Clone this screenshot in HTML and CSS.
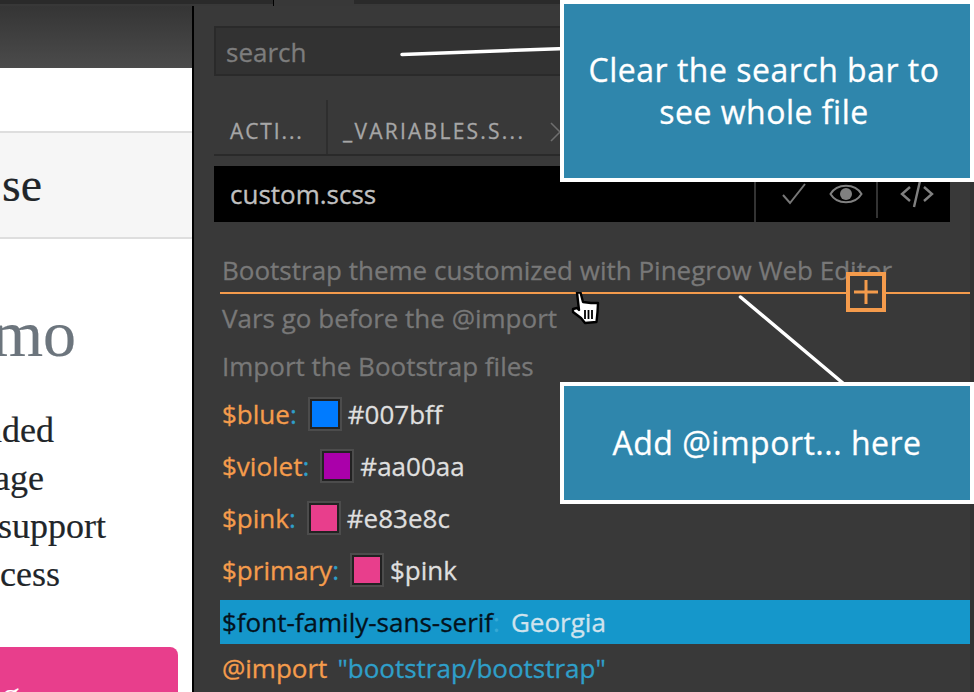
FILE: index.html
```html
<!DOCTYPE html>
<html lang="en">
<head>
<meta charset="utf-8">
<title>Pinegrow SCSS editor</title>
<link rel="stylesheet" href="styles.css">
</head>
<body>
<div class="app">
  <div class="topbar"><span class="top-left"></span><span class="top-tab"></span><span class="top-right"></span></div>
  <div class="main">
    <section class="preview">
      <div class="preview-head"></div>
      <div class="page-nav"></div>
      <div class="jumbo-strip"><span class="strip-title">se</span></div>
      <div class="page-body">
        <h1 class="clip demo">mo</h1>
        <ul class="features">
          <li class="clip w54">nded</li>
          <li class="clip w44">age</li>
          <li class="clip w106">support</li>
          <li class="clip w60">ccess</li>
        </ul>
        <div class="cta"><span class="clip cta-text">ng</span></div>
      </div>
    </section>
    <section class="panel">
      <div class="panel-inner">
        <div class="search">search</div>
        <div class="tabs">
          <div class="tab tab-first">ACTI...</div>
          <div class="tab tab-second">_VARIABLES.S...
            <svg class="tab-close" viewBox="0 0 20 20" width="20" height="20"><path d="M1 1 L19 19 M19 1 L1 19" fill="none" stroke="#6e6e6e" stroke-width="1.600"/></svg>
          </div>
        </div>
        <div class="filebar">
          <span class="filename">custom.scss</span>
          <div class="file-tools">
            <svg class="ico-check" viewBox="0 0 24 24" width="24" height="24"><path d="M1 13 L8 21 L23 2" fill="none" stroke="#777" stroke-width="2"/></svg>
            <svg class="ico-eye" viewBox="0 0 34 24" width="34" height="24"><path d="M1.500 12 C8 1 26 1 32.500 12 C26 23 8 23 1.500 12 Z" fill="none" stroke="#808080" stroke-width="2"/><circle cx="17" cy="12" r="6" fill="#808080"/></svg>
            <svg class="ico-code" viewBox="0 0 34 28" width="34" height="28"><path d="M10 7 L2 14 L10 21 M24 7 L32 14 L24 21 M20 1 L14 27" fill="none" stroke="#808080" stroke-width="2.400"/></svg>
          </div>
        </div>
      </div>
      <div class="code">
        <div class="line comment">Bootstrap theme customized with Pinegrow Web Editor</div>
        <div class="line comment">Vars go before the @import</div>
        <div class="line comment">Import the Bootstrap files</div>
        <div class="line var"><span class="key">$blue</span><span class="colon">:</span><span class="swatch"><i class="c-blue"></i></span><span class="val">#007bff</span></div>
        <div class="line var"><span class="key">$violet</span><span class="colon">:</span><span class="swatch"><i class="c-violet"></i></span><span class="val">#aa00aa</span></div>
        <div class="line var"><span class="key">$pink</span><span class="colon">:</span><span class="swatch"><i class="c-pink"></i></span><span class="val">#e83e8c</span></div>
        <div class="line var"><span class="key">$primary</span><span class="colon">:</span><span class="swatch"><i class="c-pink"></i></span><span class="val">$pink</span></div>
        <div class="line selected"><span class="sel-key">$font-family-sans-serif</span><span class="sel-colon">:</span><span class="sel-val">Georgia</span></div>
        <div class="line import"><span class="key">@import</span><span class="str">"bootstrap/bootstrap"</span></div>
      </div>
    </section>
  </div>

  <div class="insert-line"></div>
  <div class="insert-plus"><svg viewBox="0 0 24 24" width="24" height="24"><path d="M12 0 V24 M0 12 H24" stroke="#f49b4c" stroke-width="3"/></svg></div>
  <svg class="arrows" viewBox="0 0 974 692" width="974" height="692"><path d="M402 54.500 L566 48.500" stroke="#fff" stroke-width="3.500" stroke-linecap="round" fill="none"/><path d="M740.500 297 L844 384" stroke="#fff" stroke-width="3.500" stroke-linecap="round" fill="none"/></svg>
  <svg class="cursor" viewBox="0 0 30 34" width="30" height="34"><path d="M6 0.500 L9.500 0.500 L12 10 L20 11 L27 11 L26.500 20 L25.500 30 L14 31 L10 26 L2 20 L2 17 L6 16 L8 18 Z" fill="#fff" stroke="#000" stroke-width="2.400" stroke-linejoin="round"/><path d="M14 18 V27 M17.500 18 V27 M21 18 V27" stroke="#000" stroke-width="1.800"/></svg>

  <div class="callout callout-search">Clear the search bar to<br>see whole file</div>
  <div class="callout callout-import">Add @import... here</div>
</div>
</body>
</html>
```

FILE: styles.css
```css
* { box-sizing: border-box; }
html, body { margin: 0; padding: 0; }
body { background: #393939; }
.app { position: relative; width: 974px; height: 692px; overflow: hidden; font-family: "Open Sans", "Noto Sans", sans-serif; font-weight: 500; -webkit-text-stroke: .3px currentColor; }

.topbar { display: flex; height: 6px; background: #383838; }
.top-left { width: 273px; height: 4px; background: #2a2a2a; }
.top-tab { width: 81px; border-left: 1px solid #000; height: 6px; background: #383838; }
.top-right { flex: 1; height: 4px; background: #2a2a2a; }

.main { display: flex; height: 686px; }
.preview { width: 194px; flex: none; border-right: 2px solid #000; background: #fff; overflow: hidden; -webkit-text-stroke: .2px currentColor; }
.preview-head { height: 62px; background: linear-gradient(#353535, #4b4b4b); }
.page-nav { height: 63px; background: #fff; }
.jumbo-strip { height: 108px; background: #f6f6f6; border-top: 2px solid #dedede; border-bottom: 2px solid #dedede; display: flex; justify-content: flex-end; width: 192px; padding-right: 150px; padding-top: 22px; font-family: "Liberation Serif", Georgia, serif; font-weight: 400; }
.clip { font-family: "Liberation Serif", Georgia, serif; font-weight: 400; white-space: nowrap; display: flex; justify-content: flex-end; }
.strip-title { font-size: 48px; line-height: 60px; color: #212529; }
.page-body { position: relative; }
.demo { margin: 58px 0 0; width: 76px; font-size: 66px; line-height: 74px; color: #6c757d; }
.features { list-style: none; margin: 35px 0 0; padding: 0; font-size: 36px; line-height: 48px; color: #212529; }
.w54 { width: 54px; }
.w44 { width: 44px; }
.w106 { width: 106px; }
.w60 { width: 60px; }
.cta { margin-top: 49px; width: 178px; height: 60px; background: #e83e8c; border-radius: 0 8px 0 0; padding-top: 28px; color: #fff; }
.cta-text { font-size: 36px; line-height: 40px; width: 20px; }

.panel { flex: 1; background: #393939; position: relative; border-right: 4px solid #333; }
.panel-inner { padding: 20px 20px 0 20px; }
.search { height: 50px; background: #323232; border: 2px solid #2a2a2a; color: #7d7d7d; font-size: 26px; line-height: 48px; padding-left: 10px; }
.tabs { display: flex; height: 56px; margin-top: 24px; border-bottom: 2px solid #2a2a2a; }
.tab { position: relative; color: #a6a6a6; font-size: 21px; letter-spacing: 1.900px; line-height: 62px; padding-left: 16px; white-space: nowrap; }
.tab-first { width: 114px; border-right: 2px solid #2e2e2e; }
.tab-second { padding-left: 15px; letter-spacing: 2.250px; }
.tab-close { position: absolute; left: 222px; top: 22px; }
.filebar { display: flex; justify-content: space-between; align-items: stretch; height: 56px; margin-top: 10px; background: #000; padding-left: 16px; }
.filename { color: #c0c0c0; font-size: 26px; line-height: 56px; }
.file-tools { display: flex; align-items: center; width: 196px; border-left: 2px solid #333; position: relative; }
.ico-check { margin-left: 26px; }
.ico-eye { margin-left: 23px; }
.ico-code { margin-left: 37px; }
.file-tools::after { content: ""; position: absolute; left: 120px; top: 0; bottom: 4px; width: 2px; background: #333; }
.code { margin-top: 24px; padding-left: 26px; }
.line { font-size: 26px; height: 48px; line-height: 48px; white-space: nowrap; display: flex; align-items: center; padding-left: 2px; }
.comment { color: #787878; }
.var { height: 52px; position: relative; top: -2px; }
.key { color: #f59c4c; }
.colon { color: #2f9fc9; }
.val { color: #dfdfdf; margin-left: 6px; }
.swatch { width: 34px; height: 34px; border: 2px solid #4c4c4c; background: #222; padding: 2px; margin-left: 11px; display: block; }
.swatch i { display: block; width: 100%; height: 100%; }
.c-blue { background: #007bff; }
.c-violet { background: #aa00aa; }
.c-pink { background: #e83e8c; }
.selected { height: 44px; background: #1597cb; margin-top: 2px; }
.sel-key { color: #04121c; }
.sel-colon { color: #36aad6; }
.sel-val { color: #cfe3ee; margin-left: 11px; }
.import { height: 50px; position: relative; top: -1px; }
.str { color: #2f9fc9; margin-left: 10px; }

.insert-line { position: absolute; left: 220px; top: 292px; width: 750px; height: 2px; background: #f49b4c; }
.insert-plus { position: absolute; left: 846px; top: 272px; width: 40px; height: 40px; border: 4px solid #f49b4c; background: #393939; padding: 4px; display: flex; align-items: center; justify-content: center; }
.arrows { position: absolute; left: 0; top: 0; pointer-events: none; }
.cursor { position: absolute; left: 571px; top: 292px; }
.callout { position: absolute; left: 560px; width: 414px; background: #2f86ac; border: 4px solid #fff; color: #fff; font-size: 32px; text-align: center; letter-spacing: .5px; }
.callout-search { top: 0; height: 182px; line-height: 42px; padding-top: 45px; padding-right: 6px; }
.callout-import { top: 382px; height: 122px; line-height: 114px; }
```
